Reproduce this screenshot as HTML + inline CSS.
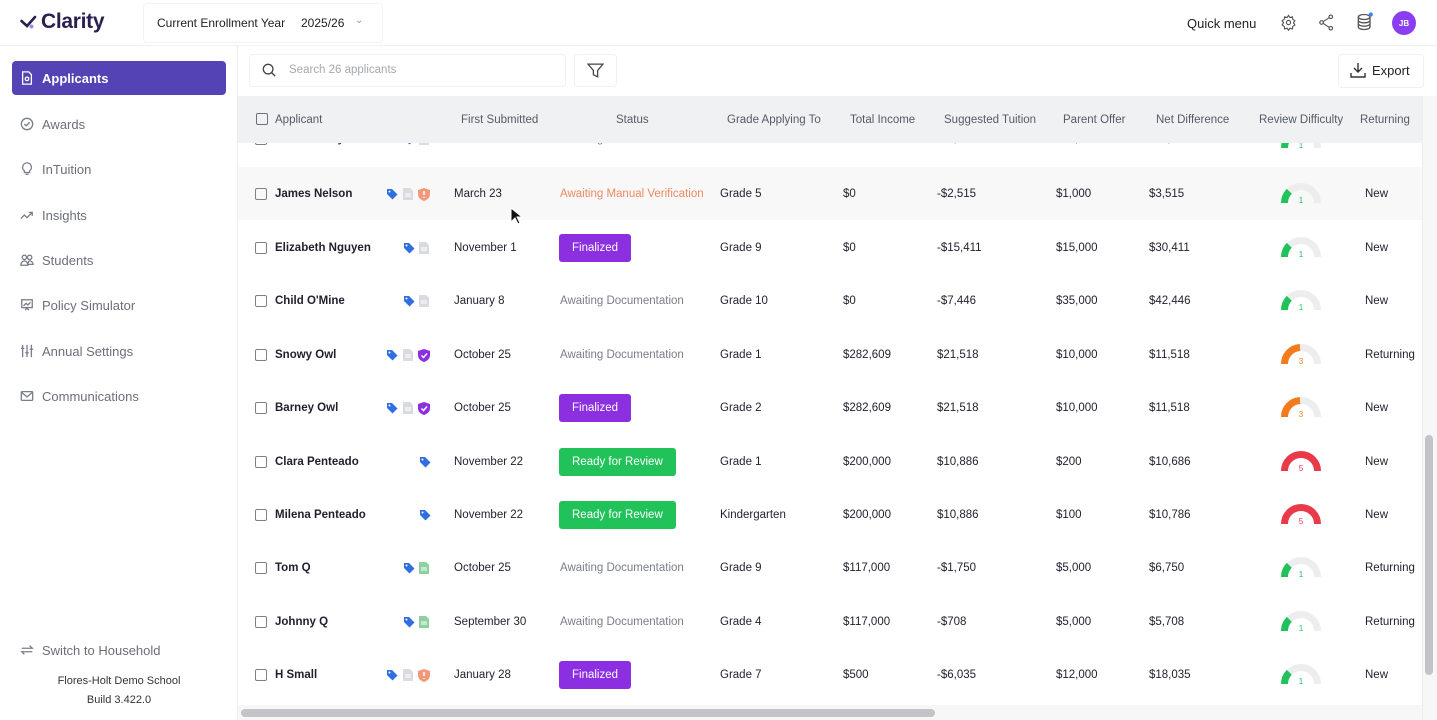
<!DOCTYPE html>
<html><head><meta charset="utf-8">
<style>
*{box-sizing:border-box;margin:0;padding:0}
body{width:1437px;height:720px;overflow:hidden;background:#fff;font-family:"Liberation Sans",sans-serif;color:#1f1f2e;position:relative}
.abs{position:absolute}
.top{position:absolute;left:0;top:0;width:1437px;height:46px;border-bottom:1px solid #eef0f2;background:#fff}
.side{position:absolute;left:0;top:46px;width:238px;height:674px;border-right:1px solid #eceef1;background:#fff}
.nav{position:absolute;left:12px;width:214px;height:34px;display:flex;align-items:center;padding-left:8px;font-size:13px;color:#6b6f7a}
.nav svg{width:14px;height:14px;margin-right:8px;stroke:#7a7e88;fill:none;stroke-width:1.5}
.nav.act{background:#5343b4;color:#fff;border-radius:4px;font-weight:bold}
.nav.act svg{stroke:#fff}
.hdr{position:absolute;left:238px;top:96px;width:1184px;height:47px;background:#eff1f3;font-size:11.5px;color:#555a66}
.hdr span{position:absolute;top:17px}
.row{position:absolute;left:238px;width:1184px;height:53px;font-size:11.5px;color:#1f1f2e}
.row>*{position:absolute}
.cb{left:17px;top:21px;width:12px;height:12px;border:1.5px solid #7d808a;border-radius:2px}
.t{top:21px}
.nm{left:37px;font-weight:bold}
.badge{top:13px;left:321px;height:28px;border-radius:3px;color:#fff;font-size:11.5px;display:flex;align-items:center;padding:0 13px}
.fin{background:#8b2fe0}
.rdy{background:#22c25a}
.aw{left:322px;color:#7a7e88}
.g{left:1043px;top:16px}
</style></head><body>

<div class="top">
  <div class="abs" style="left:20px;top:10px;display:flex;align-items:center">
    <svg width="20" height="16" viewBox="0 0 20 16"><path d="M1.5 7 L7 12 L15 3" stroke="#2a1f4f" stroke-width="2.6" fill="none" stroke-linecap="round"/><circle cx="11.5" cy="12.5" r="2" fill="#a08be8"/></svg>
    <span style="font-size:21px;font-weight:bold;color:#2a1f4f;margin-left:1px;letter-spacing:-0.3px">Clarity</span>
  </div>
  <div class="abs" style="left:143px;top:3px;width:240px;height:40px;border:1px solid #f1f2f4;border-radius:4px"></div>
  <div class="abs" style="left:157px;top:16px;font-size:12px;color:#222">Current Enrollment Year</div>
  <div class="abs" style="left:301px;top:16px;font-size:12px;color:#222">2025/26</div>
  <div class="abs" style="left:355px;top:15px;font-size:10px;color:#999">&#8964;</div>
  <div class="abs" style="left:1187px;top:16px;font-size:13px;color:#222">Quick menu</div>
  <svg class="abs" style="left:1280px;top:14px" width="17" height="17" viewBox="0 0 24 24" fill="none" stroke="#555" stroke-width="1.6"><circle cx="12" cy="12" r="3"/><path d="M12 2l2 3 3.5-1 .5 3.5 3 2-2 3 2 3-3 2-.5 3.5L14 20l-2 3-2-3-3.5 1-.5-3.5-3-2 2-3-2-3 3-2L6.5 4 10 5z"/></svg>
  <svg class="abs" style="left:1318px;top:14px" width="17" height="17" viewBox="0 0 24 24" fill="none" stroke="#555" stroke-width="1.6"><circle cx="18" cy="4" r="2.5"/><circle cx="5" cy="12" r="2.5"/><circle cx="18" cy="20" r="2.5"/><path d="M7 11l9-6M7 13l9 6"/></svg>
  <svg class="abs" style="left:1355px;top:12px" width="20" height="20" viewBox="0 0 24 24" fill="none" stroke="#555" stroke-width="1.6"><ellipse cx="11" cy="6" rx="7" ry="3"/><path d="M4 6v12c0 1.7 3 3 7 3s7-1.3 7-3V6M4 10c0 1.7 3 3 7 3s7-1.3 7-3M4 14c0 1.7 3 3 7 3s7-1.3 7-3"/><circle cx="19" cy="3" r="2.5" fill="#3b82f6" stroke="none"/></svg>
  <div class="abs" style="left:1392px;top:11px;width:24px;height:24px;border-radius:50%;background:#8b3ef0;color:#fff;font-size:8px;font-weight:bold;display:flex;align-items:center;justify-content:center">JB</div>
</div>

<div class="side">
  <div class="nav act" style="top:15px"><svg viewBox="0 0 16 16"><path d="M3 1h7l3 3v11H3z"/><circle cx="8" cy="9" r="2"/></svg>Applicants</div>
  <div class="nav" style="top:61px"><svg viewBox="0 0 16 16"><circle cx="8" cy="8" r="6.5"/><path d="M5 8l2 2 4-4"/></svg>Awards</div>
  <div class="nav" style="top:106px"><svg viewBox="0 0 16 16"><path d="M8 1a5 5 0 0 0-3 9v2h6v-2a5 5 0 0 0-3-9zM6 14h4"/></svg>InTuition</div>
  <div class="nav" style="top:152px"><svg viewBox="0 0 16 16"><path d="M1 12l4-4 3 3 6-6M10 5h4v4"/></svg>Insights</div>
  <div class="nav" style="top:197px"><svg viewBox="0 0 16 16"><circle cx="5" cy="5" r="2.5"/><circle cx="11" cy="5" r="2.5"/><path d="M1 14c0-3 2-5 4-5s4 2 4 5zM9 13c0-2 1-4 2-4 2 0 4 2 4 4z"/></svg>Students</div>
  <div class="nav" style="top:242px"><svg viewBox="0 0 16 16"><rect x="2" y="2" width="12" height="9"/><path d="M4 9l3-3 2 2 3-3M6 14l2-3 2 3"/></svg>Policy Simulator</div>
  <div class="nav" style="top:288px"><svg viewBox="0 0 16 16"><path d="M3 1v14M8 1v14M13 1v14M1 5h4M6 10h4M11 6h4"/></svg>Annual Settings</div>
  <div class="nav" style="top:333px"><svg viewBox="0 0 16 16"><rect x="1.5" y="3" width="13" height="10" rx="1"/><path d="M2 4l6 5 6-5"/></svg>Communications</div>
  <div class="nav" style="top:587px"><svg viewBox="0 0 16 16"><path d="M2 6h12l-3-3M14 10H2l3 3"/></svg>Switch to Household</div>
  <div class="abs" style="left:0;width:238px;top:629px;text-align:center;font-size:11px;color:#333">Flores-Holt Demo School</div>
  <div class="abs" style="left:0;width:238px;top:648px;text-align:center;font-size:11px;color:#333">Build 3.422.0</div>
</div>

<div class="abs" style="left:249px;top:54px;width:317px;height:33px;border:1px solid #eef0f2;border-radius:4px"></div>
<svg class="abs" style="left:262px;top:63px" width="14" height="14" viewBox="0 0 16 16" fill="none" stroke="#444" stroke-width="1.5"><circle cx="7" cy="7" r="5.5"/><path d="M11 11l4 4"/></svg>
<div class="abs" style="left:289px;top:64px;font-size:11.5px;color:#a5a8b0">Search 26 applicants</div>
<div class="abs" style="left:574px;top:54px;width:43px;height:33px;border:1px solid #eef0f2;border-radius:4px"></div>
<svg class="abs" style="left:587px;top:62px" width="17" height="17" viewBox="0 0 16 16" fill="none" stroke="#444" stroke-width="1.2"><path d="M1 2h14l-5 6v6l-4-2V8z"/></svg>
<div class="abs" style="left:1338px;top:54px;width:86px;height:34px;border:1px solid #eef0f2;border-radius:4px"></div>
<svg class="abs" style="left:1350px;top:62px" width="16" height="16" viewBox="0 0 16 16" fill="none" stroke="#333" stroke-width="1.4"><path d="M8 1v9M4 6l4 4 4-4M1 11v4h14v-4"/></svg>
<div class="abs" style="left:1372px;top:63px;font-size:13px;color:#222">Export</div>

<svg width="0" height="0" style="position:absolute">
<defs>
<symbol id="tag" viewBox="0 0 12 12"><path d="M1 1h5l5.5 5.5-5 5L1 6z" fill="#2f6fe0"/><circle cx="3.5" cy="3.5" r="1" fill="#fff"/></symbol>
<symbol id="doc" viewBox="0 0 10 12"><path d="M0 0h7l3 3v9H0z" fill="#d9dbe0"/><path d="M2 6h6M2 8h6" stroke="#fff"/></symbol>
<symbol id="docg" viewBox="0 0 10 12"><path d="M0 0h7l3 3v9H0z" fill="#8fd0a0"/><path d="M2 6h6M2 8h6" stroke="#fff"/></symbol>
<symbol id="sho" viewBox="0 0 12 13"><path d="M6 0l6 2v4c0 4-3 6-6 7-3-1-6-3-6-7V2z" fill="#f3987a"/><path d="M6 3v4M6 9v1" stroke="#fff" stroke-width="1.5"/></symbol>
<symbol id="shp" viewBox="0 0 12 13"><path d="M6 0l6 2v4c0 4-3 6-6 7-3-1-6-3-6-7V2z" fill="#8b2fe0"/><path d="M3.5 6.5l2 2 3.5-4" stroke="#fff" stroke-width="1.5" fill="none"/></symbol>
<symbol id="g1" viewBox="0 0 40 22"><path d="M3.5 20A16.5 16.5 0 0 1 36.5 20" stroke="#ededed" stroke-width="7" fill="none"/><path d="M3.5 20A16.5 16.5 0 0 1 8.3 8.3" stroke="#22c25a" stroke-width="7" fill="none"/><text x="20" y="20" font-size="8" fill="#22c25a" text-anchor="middle" font-family="Liberation Sans">1</text></symbol>
<symbol id="g3" viewBox="0 0 40 22"><path d="M3.5 20A16.5 16.5 0 0 1 36.5 20" stroke="#ededed" stroke-width="7" fill="none"/><path d="M3.5 20A16.5 16.5 0 0 1 19 3.5" stroke="#f47b1c" stroke-width="7" fill="none"/><text x="20" y="20" font-size="8" fill="#f47b1c" text-anchor="middle" font-family="Liberation Sans">3</text></symbol>
<symbol id="g5" viewBox="0 0 40 22"><path d="M3.5 20A16.5 16.5 0 0 1 36.5 20" stroke="#e83a4a" stroke-width="7" fill="none"/><text x="20" y="20" font-size="8" fill="#e83a4a" text-anchor="middle" font-family="Liberation Sans">5</text></symbol>
</defs></svg>

<!-- partial row behind header -->
<div class="row" style="top:112px;color:#333"><span class="cb"></span><span class="t nm">Jordan Kelly</span>
<svg class="abs" style="left:165px;top:21px" width="12" height="12"><use href="#tag"/></svg><svg class="abs" style="left:181px;top:21px" width="10" height="12"><use href="#doc"/></svg>
<span class="t" style="left:216px">December 17</span><span class="t aw">Awaiting Documentation</span><span class="t" style="left:482px">Grade 10</span><span class="t" style="left:605px">$0</span><span class="t" style="left:699px">-$1,874</span><span class="t" style="left:818px">$10,000</span><span class="t" style="left:911px">$11,874</span><svg class="g" width="40" height="22"><use href="#g1"/></svg><span class="t" style="left:1127px">New</span></div>

<div class="hdr">
  <span style="left:18px;top:17px;width:12px;height:12px;border:1.5px solid #6d707a;border-radius:2px"></span>
  <span style="left:37px;top:18px">Applicant</span>
  <span style="left:223px;top:18px">First Submitted</span>
  <span style="left:378px;top:18px">Status</span>
  <span style="left:489px;top:18px">Grade Applying To</span>
  <span style="left:612px;top:18px">Total Income</span>
  <span style="left:706px;top:18px">Suggested Tuition</span>
  <span style="left:825px;top:18px">Parent Offer</span>
  <span style="left:918px;top:18px">Net Difference</span>
  <span style="left:1021px;top:18px">Review Difficulty</span>
  <span style="left:1122px;top:18px">Returning</span>
</div>

<div class="row" style="top:167px;background:#f8f8f9"><span class="cb"></span><span class="t nm">James Nelson</span>
<svg class="abs" style="left:148px;top:21px" width="12" height="12"><use href="#tag"/></svg><svg class="abs" style="left:165px;top:21px" width="10" height="12"><use href="#doc"/></svg><svg class="abs" style="left:180px;top:21px" width="12" height="13"><use href="#sho"/></svg>
<span class="t" style="left:216px">March 23</span><span class="t aw" style="color:#ea8a62">Awaiting Manual Verification</span><span class="t" style="left:482px">Grade 5</span><span class="t" style="left:605px">$0</span><span class="t" style="left:699px">-$2,515</span><span class="t" style="left:818px">$1,000</span><span class="t" style="left:911px">$3,515</span><svg class="g" width="40" height="22"><use href="#g1"/></svg><span class="t" style="left:1127px">New</span></div>

<div class="row" style="top:221px"><span class="cb"></span><span class="t nm">Elizabeth Nguyen</span>
<svg class="abs" style="left:165px;top:21px" width="12" height="12"><use href="#tag"/></svg><svg class="abs" style="left:181px;top:21px" width="10" height="12"><use href="#doc"/></svg>
<span class="t" style="left:216px">November 1</span><span class="badge fin">Finalized</span><span class="t" style="left:482px">Grade 9</span><span class="t" style="left:605px">$0</span><span class="t" style="left:699px">-$15,411</span><span class="t" style="left:818px">$15,000</span><span class="t" style="left:911px">$30,411</span><svg class="g" width="40" height="22"><use href="#g1"/></svg><span class="t" style="left:1127px">New</span></div>

<div class="row" style="top:274px"><span class="cb"></span><span class="t nm">Child O'Mine</span>
<svg class="abs" style="left:165px;top:21px" width="12" height="12"><use href="#tag"/></svg><svg class="abs" style="left:181px;top:21px" width="10" height="12"><use href="#doc"/></svg>
<span class="t" style="left:216px">January 8</span><span class="t aw">Awaiting Documentation</span><span class="t" style="left:482px">Grade 10</span><span class="t" style="left:605px">$0</span><span class="t" style="left:699px">-$7,446</span><span class="t" style="left:818px">$35,000</span><span class="t" style="left:911px">$42,446</span><svg class="g" width="40" height="22"><use href="#g1"/></svg><span class="t" style="left:1127px">New</span></div>

<div class="row" style="top:328px"><span class="cb"></span><span class="t nm">Snowy Owl</span>
<svg class="abs" style="left:148px;top:21px" width="12" height="12"><use href="#tag"/></svg><svg class="abs" style="left:165px;top:21px" width="10" height="12"><use href="#doc"/></svg><svg class="abs" style="left:180px;top:21px" width="12" height="13"><use href="#shp"/></svg>
<span class="t" style="left:216px">October 25</span><span class="t aw">Awaiting Documentation</span><span class="t" style="left:482px">Grade 1</span><span class="t" style="left:605px">$282,609</span><span class="t" style="left:699px">$21,518</span><span class="t" style="left:818px">$10,000</span><span class="t" style="left:911px">$11,518</span><svg class="g" width="40" height="22"><use href="#g3"/></svg><span class="t" style="left:1127px">Returning</span></div>

<div class="row" style="top:381px"><span class="cb"></span><span class="t nm">Barney Owl</span>
<svg class="abs" style="left:148px;top:21px" width="12" height="12"><use href="#tag"/></svg><svg class="abs" style="left:165px;top:21px" width="10" height="12"><use href="#doc"/></svg><svg class="abs" style="left:180px;top:21px" width="12" height="13"><use href="#shp"/></svg>
<span class="t" style="left:216px">October 25</span><span class="badge fin">Finalized</span><span class="t" style="left:482px">Grade 2</span><span class="t" style="left:605px">$282,609</span><span class="t" style="left:699px">$21,518</span><span class="t" style="left:818px">$10,000</span><span class="t" style="left:911px">$11,518</span><svg class="g" width="40" height="22"><use href="#g3"/></svg><span class="t" style="left:1127px">New</span></div>

<div class="row" style="top:435px"><span class="cb"></span><span class="t nm">Clara Penteado</span>
<svg class="abs" style="left:181px;top:21px" width="12" height="12"><use href="#tag"/></svg>
<span class="t" style="left:216px">November 22</span><span class="badge rdy">Ready for Review</span><span class="t" style="left:482px">Grade 1</span><span class="t" style="left:605px">$200,000</span><span class="t" style="left:699px">$10,886</span><span class="t" style="left:818px">$200</span><span class="t" style="left:911px">$10,686</span><svg class="g" width="40" height="22"><use href="#g5"/></svg><span class="t" style="left:1127px">New</span></div>

<div class="row" style="top:488px"><span class="cb"></span><span class="t nm">Milena Penteado</span>
<svg class="abs" style="left:181px;top:21px" width="12" height="12"><use href="#tag"/></svg>
<span class="t" style="left:216px">November 22</span><span class="badge rdy">Ready for Review</span><span class="t" style="left:482px">Kindergarten</span><span class="t" style="left:605px">$200,000</span><span class="t" style="left:699px">$10,886</span><span class="t" style="left:818px">$100</span><span class="t" style="left:911px">$10,786</span><svg class="g" width="40" height="22"><use href="#g5"/></svg><span class="t" style="left:1127px">New</span></div>

<div class="row" style="top:541px"><span class="cb"></span><span class="t nm">Tom Q</span>
<svg class="abs" style="left:165px;top:21px" width="12" height="12"><use href="#tag"/></svg><svg class="abs" style="left:181px;top:21px" width="10" height="12"><use href="#docg"/></svg>
<span class="t" style="left:216px">October 25</span><span class="t aw">Awaiting Documentation</span><span class="t" style="left:482px">Grade 9</span><span class="t" style="left:605px">$117,000</span><span class="t" style="left:699px">-$1,750</span><span class="t" style="left:818px">$5,000</span><span class="t" style="left:911px">$6,750</span><svg class="g" width="40" height="22"><use href="#g1"/></svg><span class="t" style="left:1127px">Returning</span></div>

<div class="row" style="top:595px"><span class="cb"></span><span class="t nm">Johnny Q</span>
<svg class="abs" style="left:165px;top:21px" width="12" height="12"><use href="#tag"/></svg><svg class="abs" style="left:181px;top:21px" width="10" height="12"><use href="#docg"/></svg>
<span class="t" style="left:216px">September 30</span><span class="t aw">Awaiting Documentation</span><span class="t" style="left:482px">Grade 4</span><span class="t" style="left:605px">$117,000</span><span class="t" style="left:699px">-$708</span><span class="t" style="left:818px">$5,000</span><span class="t" style="left:911px">$5,708</span><svg class="g" width="40" height="22"><use href="#g1"/></svg><span class="t" style="left:1127px">Returning</span></div>

<div class="row" style="top:648px"><span class="cb"></span><span class="t nm">H Small</span>
<svg class="abs" style="left:148px;top:21px" width="12" height="12"><use href="#tag"/></svg><svg class="abs" style="left:165px;top:21px" width="10" height="12"><use href="#doc"/></svg><svg class="abs" style="left:180px;top:21px" width="12" height="13"><use href="#sho"/></svg>
<span class="t" style="left:216px">January 28</span><span class="badge fin">Finalized</span><span class="t" style="left:482px">Grade 7</span><span class="t" style="left:605px">$500</span><span class="t" style="left:699px">-$6,035</span><span class="t" style="left:818px">$12,000</span><span class="t" style="left:911px">$18,035</span><svg class="g" width="40" height="22"><use href="#g1"/></svg><span class="t" style="left:1127px">New</span></div>

<div class="abs" style="left:1422px;top:96px;width:15px;height:624px;background:#f7f7f8;border-left:1px solid #eceef1"></div>
<div class="abs" style="left:1425px;top:435px;width:8px;height:240px;background:#c4c4c8;border-radius:4px"></div>
<div class="abs" style="left:238px;top:705px;width:1184px;height:15px;background:#f7f7f8"></div>
<div class="abs" style="left:241px;top:709px;width:694px;height:8px;background:#c4c4c8;border-radius:4px"></div>
<svg class="abs" style="left:510px;top:207px" width="12" height="18" viewBox="0 0 12 18"><path d="M1 1v14l4-4 3 6 2-1-3-6h5z" fill="#111" stroke="#fff"/></svg>
</body></html>
